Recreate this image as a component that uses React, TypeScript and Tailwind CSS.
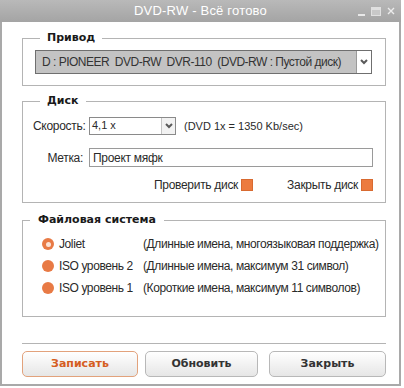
import React from 'react';

const Chevron = () => (
    <svg width="10" height="8" viewBox="0 0 10 8">
        <polyline points="2,2 5,5 8,2" fill="none" stroke="#5a5a5a" strokeWidth="2" />
    </svg>
);

function GroupTitle({ children, ml }: { children: React.ReactNode; ml: string }) {
    return (
        <div className={`self-start -mt-[9px] h-[16px] leading-[16px] bg-white px-[7px] text-[11px] font-bold text-[#1a1a1a] font-['DejaVu_Sans',sans-serif] ${ml}`}>
            {children}
        </div>
    );
}

function Radio({ checked }: { checked?: boolean }) {
    return checked ? (
        <span className="w-[12px] h-[12px] rounded-full bg-[#e87a45] flex items-center justify-center">
            <span className="w-[5px] h-[5px] rounded-full bg-[#fbe3d6]" />
        </span>
    ) : (
        <span className="w-[12px] h-[12px] rounded-full bg-[#e87a45]" />
    );
}

export default function App() {
    const fs = [
        { name: 'Joliet', desc: '(Длинные имена, многоязыковая поддержка)', checked: true },
        { name: 'ISO уровень 2', desc: '(Длинные имена, максимум 31 символ)' },
        { name: 'ISO уровень 1', desc: '(Короткие имена, максимум 11 символов)' },
    ];

    return (
        <div className="w-[404px] h-[388px] bg-white font-['Liberation_Sans',Arial,sans-serif] text-[11px] text-[#2a2a2a]">
            <div className="w-[401px] h-[386px] border-2 border-t-0 border-[#a9a9a9] flex flex-col bg-white">
                {/* Title bar */}
                <div className="relative h-[22px] -mx-[2px] bg-gradient-to-b from-[#b9b9b9] to-[#a4a4a4] flex items-center justify-center">
                    <span className="text-white text-[13px] tracking-[0.2px]">DVD-RW - Всё готово</span>
                    <div className="absolute right-[6px] top-0 h-[22px] flex items-center gap-[6px]">
                        <span className="w-[7px] h-[2px] bg-[#e8e8e8] mt-[8px]" />
                        <span className="w-[10px] h-[9px] border border-[#e0e0e0] border-t-[3px] bg-[#c8c8c8]" />
                        <svg width="8" height="8" viewBox="0 0 8 8">
                            <path d="M1 1 L7 7 M7 1 L1 7" stroke="#ececec" strokeWidth="1.4" />
                        </svg>
                    </div>
                </div>

                <div className="flex flex-col pl-[20px] pr-[13px] pt-[16px]">
                    {/* Привод */}
                    <div className="border border-[#b4b4b4] flex flex-col pl-[12px] pr-[13px] pb-[11px]">
                        <GroupTitle ml="ml-[5px]">Привод</GroupTitle>
                        <div className="mt-[4px] h-[24px] border border-[#6f6f6f] bg-[#c3c3c3] flex items-center">
                            <span className="flex-1 min-w-0 pl-[6px] text-[#333] whitespace-pre overflow-hidden text-[12px] tracking-[-0.5px]">D : PIONEER  DVD-RW  DVR-110  (DVD-RW : Пустой диск)</span>
                            <span className="w-[15px] h-[22px] shrink-0 bg-white border-l border-[#9a9a9a] flex items-center justify-center">
                                <Chevron />
                            </span>
                        </div>
                    </div>

                    {/* Диск */}
                    <div className="mt-[15px] border border-[#b4b4b4] flex flex-col pl-[10px] pr-[12px] pb-[11px]">
                        <GroupTitle ml="ml-[7px] px-[3px]">Диск</GroupTitle>
                        <div className="mt-[8px] h-[18px] flex items-center">
                            <span className="w-[50px] text-right text-[12px] tracking-[-0.3px]">Скорость:</span>
                            <div className="ml-[6px] w-[87px] h-[18px] border border-[#8a8a8a] bg-white flex items-center">
                                <span className="flex-1 pl-[2px] -mt-[2px]">4,1 x</span>
                                <span className="w-[14px] h-[16px] bg-[#f2f2f2] border-l border-[#c4c4c4] flex items-center justify-center">
                                    <Chevron />
                                </span>
                            </div>
                            <span className="ml-[8px]">(DVD 1x = 1350 Kb/sec)</span>
                        </div>
                        <div className="mt-[13px] h-[19px] flex items-center">
                            <span className="w-[50px] text-right text-[12px] tracking-[-0.3px]">Метка:</span>
                            <div className="ml-[6px] flex-1 h-[19px] border border-[#9a9a9a] bg-white flex items-center pl-[3px] text-[12px] tracking-[-0.3px]">
                                Проект мяфк
                            </div>
                        </div>
                        <div className="mt-[12px] h-[12px] flex items-center justify-end text-[12px] tracking-[-0.3px]">
                            <span>Проверить диск</span>
                            <span className="ml-[3px] w-[12px] h-[12px] bg-[#ec7b3f] border border-[#d86a30]" />
                            <span className="ml-[34px]">Закрыть диск</span>
                            <span className="ml-[3px] w-[12px] h-[12px] bg-[#ec7b3f] border border-[#d86a30]" />
                        </div>
                    </div>

                    {/* Файловая система */}
                    <div className="mt-[17px] border border-[#b4b4b4] flex flex-col pl-[19px] pb-[17px]">
                        <GroupTitle ml="-ml-[12px] px-[8px]">Файловая система</GroupTitle>
                        <div className="mt-[5px] flex flex-col text-[12px] tracking-[-0.4px]">
                            {fs.map((f) => (
                                <div key={f.name} className="h-[22px] flex items-center whitespace-nowrap">
                                    <Radio checked={f.checked} />
                                    <span className="ml-[5px] w-[84px]">{f.name}</span>
                                    <span>{f.desc}</span>
                                </div>
                            ))}
                        </div>
                    </div>

                    {/* Separator */}
                    <div className="mt-[26px] h-px bg-[#b4b4b4]" />

                    {/* Buttons */}
                    <div className="mt-[7px] flex">
                        <button className="w-[116px] h-[26px] rounded-[5px] border border-[#e2a27c] bg-gradient-to-b from-white to-[#e6e6e6] text-[11px] font-bold text-[#d55d22] font-['DejaVu_Sans',sans-serif]">
                            Записать
                        </button>
                        <button className="ml-[7px] w-[113px] h-[26px] rounded-[5px] border border-[#b8b8b8] bg-gradient-to-b from-white to-[#e6e6e6] text-[11px] font-bold text-[#333] font-['DejaVu_Sans',sans-serif]">
                            Обновить
                        </button>
                        <button className="ml-[11px] w-[117px] h-[26px] rounded-[5px] border border-[#b8b8b8] bg-gradient-to-b from-white to-[#e6e6e6] text-[11px] font-bold text-[#333] font-['DejaVu_Sans',sans-serif]">
                            Закрыть
                        </button>
                    </div>
                </div>
            </div>
        </div>
    );
}
